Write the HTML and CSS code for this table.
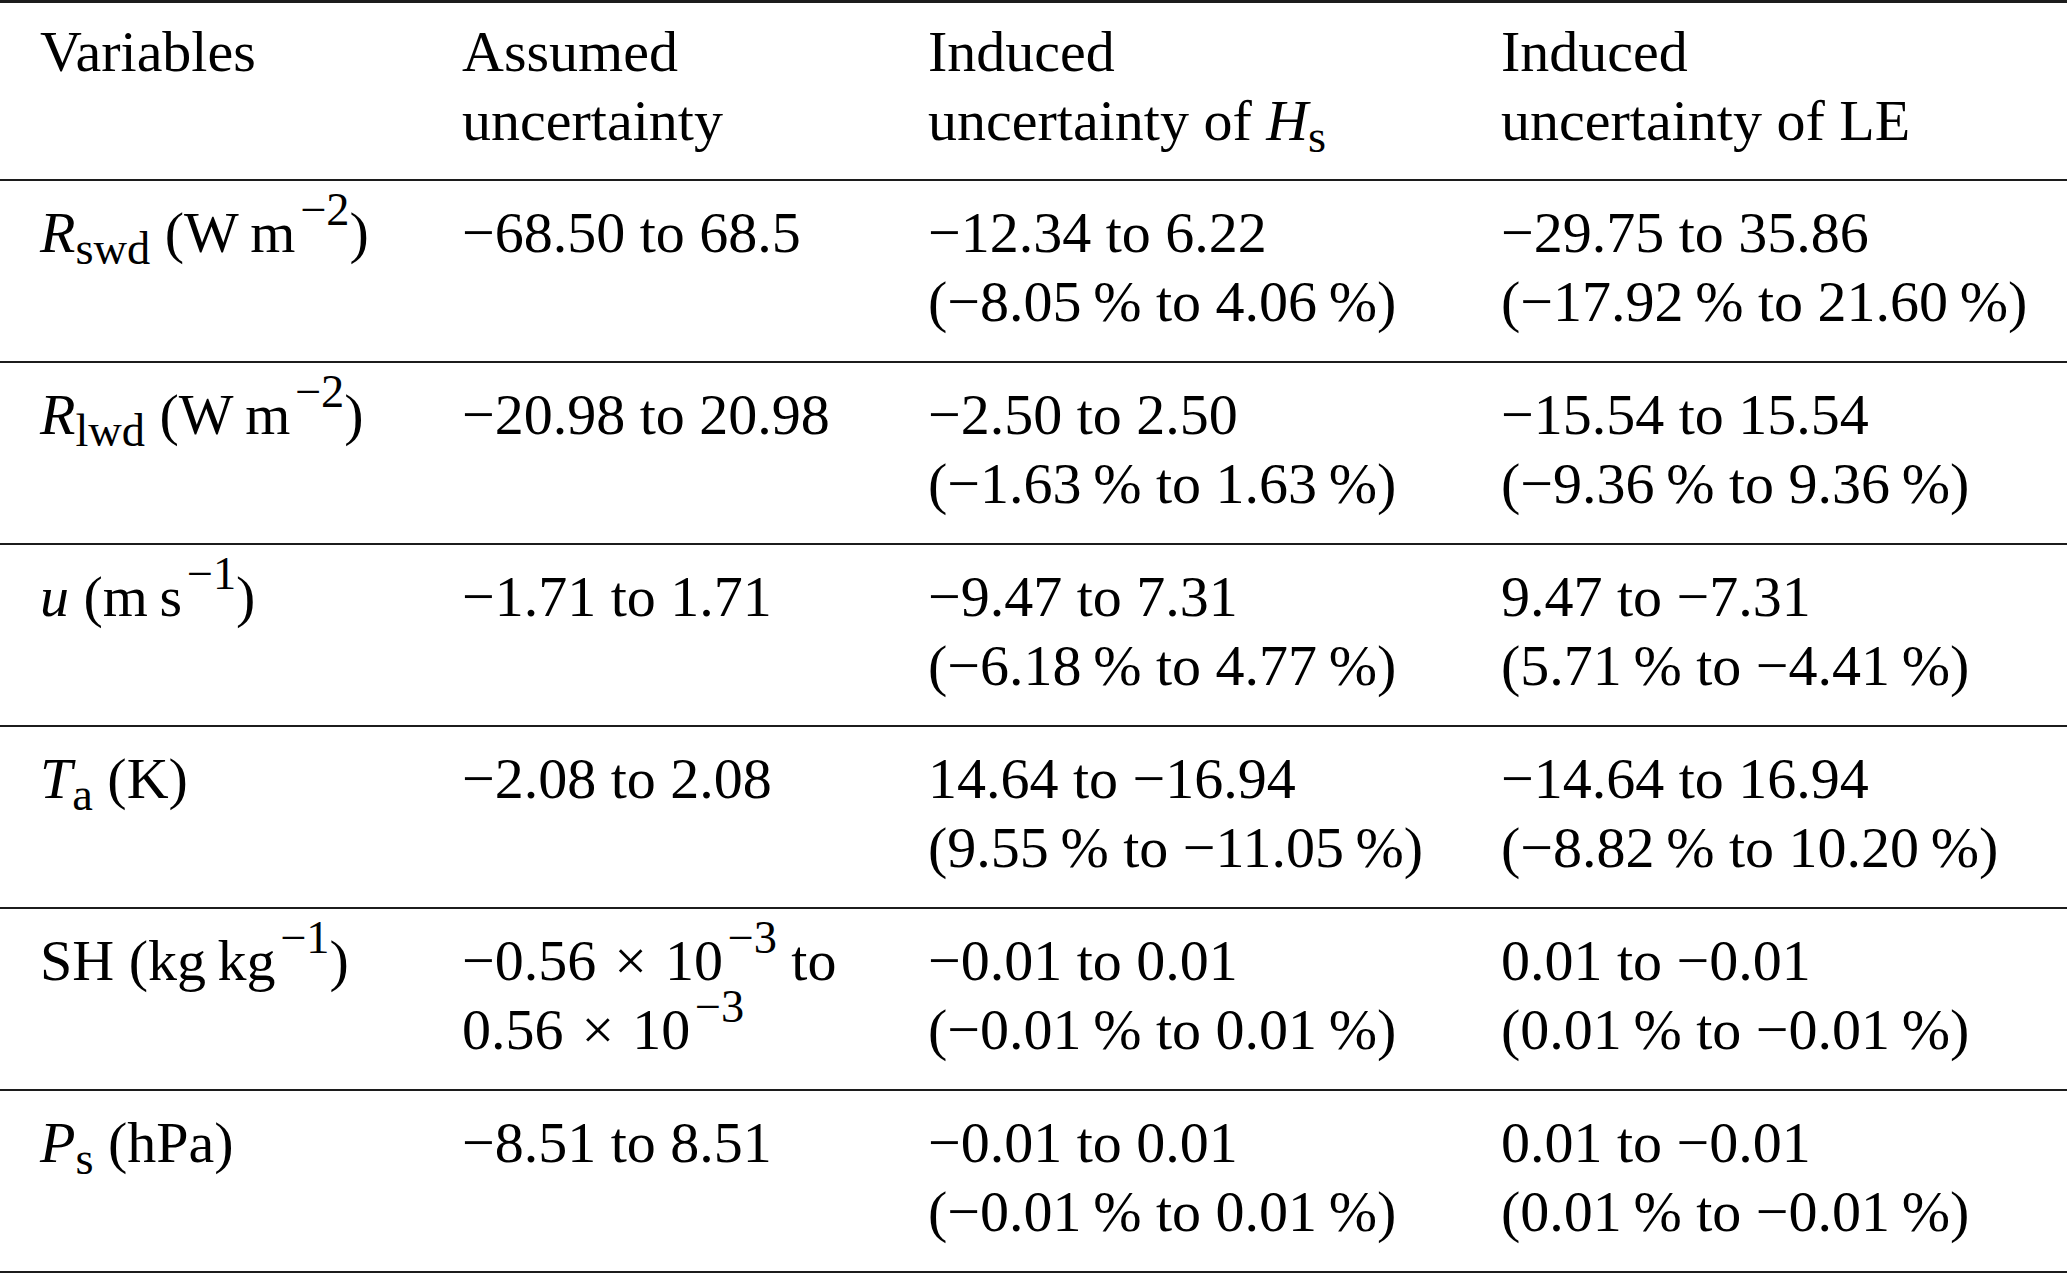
FILE: index.html
```html
<!DOCTYPE html>
<html lang="en">
<head>
<meta charset="utf-8">
<title>Uncertainty table</title>
<link rel="stylesheet" href="styles.css">
</head>
<body>
<table class="tbl">
  <colgroup>
    <col class="c1">
    <col class="c2">
    <col class="c3">
    <col class="c4">
  </colgroup>
  <thead>
    <tr>
      <th>Variables</th>
      <th>Assumed<br>uncertainty</th>
      <th>Induced<br>uncertainty of <i>H</i><sub>s</sub></th>
      <th>Induced<br>uncertainty of LE</th>
    </tr>
  </thead>
  <tbody>
    <tr>
      <td><i>R</i><sub>swd</sub> (W&#8201;m<sup>−2</sup>)</td>
      <td>−68.50 to 68.5</td>
      <td>−12.34 to 6.22<br>(−8.05&#8201;% to 4.06&#8201;%)</td>
      <td>−29.75 to 35.86<br>(−17.92&#8201;% to 21.60&#8201;%)</td>
    </tr>
    <tr>
      <td><i>R</i><sub>lwd</sub> (W&#8201;m<sup>−2</sup>)</td>
      <td>−20.98 to 20.98</td>
      <td>−2.50 to 2.50<br>(−1.63&#8201;% to 1.63&#8201;%)</td>
      <td>−15.54 to 15.54<br>(−9.36&#8201;% to 9.36&#8201;%)</td>
    </tr>
    <tr>
      <td><i>u</i> (m&#8201;s<sup>−1</sup>)</td>
      <td>−1.71 to 1.71</td>
      <td>−9.47 to 7.31<br>(−6.18&#8201;% to 4.77&#8201;%)</td>
      <td>9.47 to −7.31<br>(5.71&#8201;% to −4.41&#8201;%)</td>
    </tr>
    <tr>
      <td><i>T</i><sub>a</sub> (K)</td>
      <td>−2.08 to 2.08</td>
      <td>14.64 to −16.94<br>(9.55&#8201;% to −11.05&#8201;%)</td>
      <td>−14.64 to 16.94<br>(−8.82&#8201;% to 10.20&#8201;%)</td>
    </tr>
    <tr>
      <td>SH (kg&#8201;kg<sup>−1</sup>)</td>
      <td>−0.56 <span class="times">×</span> 10<sup>−3</sup> to<br>0.56 <span class="times">×</span> 10<sup>−3</sup></td>
      <td>−0.01 to 0.01<br>(−0.01&#8201;% to 0.01&#8201;%)</td>
      <td>0.01 to −0.01<br>(0.01&#8201;% to −0.01&#8201;%)</td>
    </tr>
    <tr>
      <td><i>P</i><sub>s</sub> (hPa)</td>
      <td>−8.51 to 8.51</td>
      <td>−0.01 to 0.01<br>(−0.01&#8201;% to 0.01&#8201;%)</td>
      <td>0.01 to −0.01<br>(0.01&#8201;% to −0.01&#8201;%)</td>
    </tr>
  </tbody>
</table>
</body>
</html>
```

FILE: styles.css
```css
html, body {
  margin: 0;
  padding: 0;
  background: #ffffff;
}

body {
  width: 2067px;
  height: 1273px;
  overflow: hidden;
  color: #000000;
  font-family: "Liberation Serif", "Times New Roman", serif;
  font-size: 58px;
  line-height: 69px;
}

.tbl {
  width: 2067px;
  table-layout: fixed;
  border-collapse: collapse;
  border-spacing: 0;
}

.c1 { width: 422px; }
.c2 { width: 466px; }
.c3 { width: 573px; }
.c4 { width: auto; }

.tbl th,
.tbl td {
  text-align: left;
  vertical-align: top;
  font-weight: normal;
  white-space: nowrap;
  padding: 17px 0 25px 40px;
  height: 138px;
  box-sizing: content-box;
}

.tbl thead tr {
  border-top: 3px solid #1c1c1c;
  border-bottom: 2px solid #1c1c1c;
}

.tbl thead th {
  padding-top: 14px;
  padding-bottom: 24px;
}

.tbl tbody tr {
  border-bottom: 2px solid #1c1c1c;
}

.tbl i {
  font-style: italic;
}

.tbl sub,
.tbl sup {
  font-size: 0.8em;
  line-height: 0;
  position: relative;
  vertical-align: baseline;
}

.tbl sub {
  top: 0.26em;
}

.tbl sup {
  top: -0.59em;
  margin-left: 0.1em;
}

.times {
  margin: 0 0.06em;
}
```
